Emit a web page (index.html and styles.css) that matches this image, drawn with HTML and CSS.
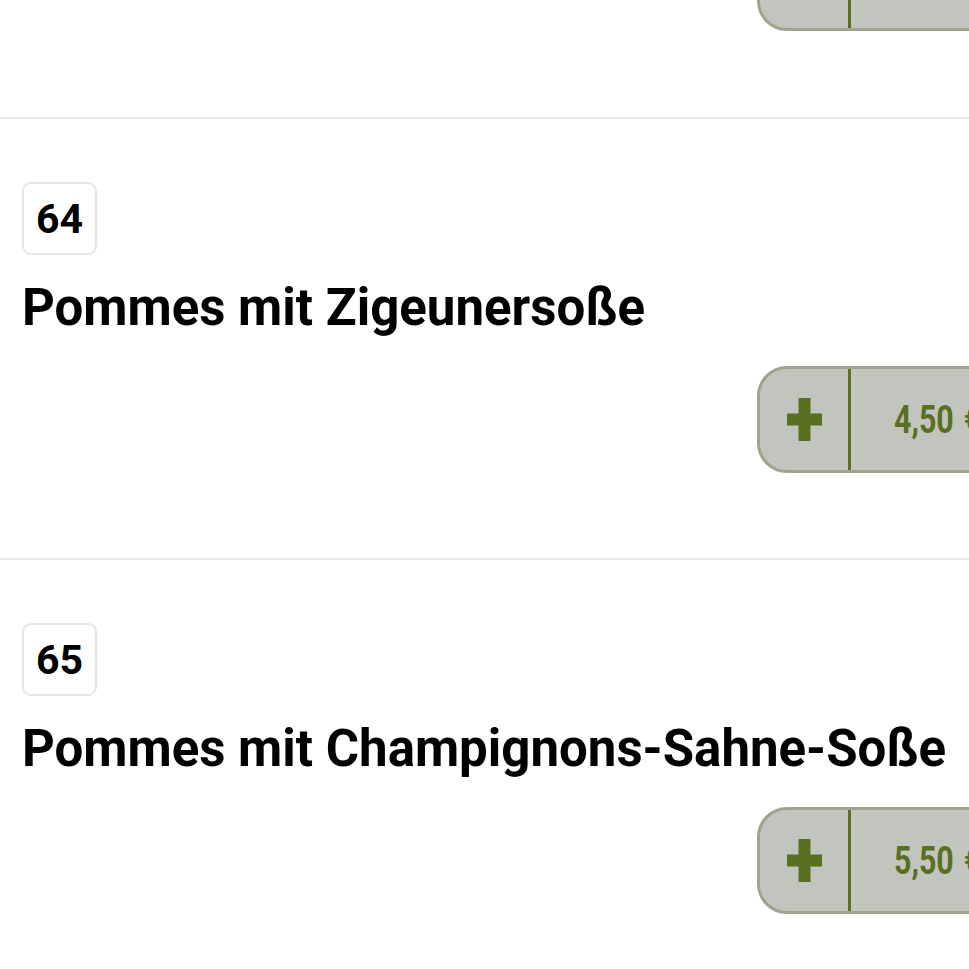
FILE: index.html
```html
<!DOCTYPE html>
<html lang="de">
<head>
  <meta charset="UTF-8">
  <meta name="viewport" content="width=device-width, initial-scale=1.0">
  <title>Speisekarte – Pommes</title>
  <link rel="stylesheet" href="styles.css">
</head>
<body>

<div class="menu">

  <div class="item item-cut">
    <div class="actions">
      <button class="order" type="button">
        <span class="add">
          <svg width="35" height="43" viewBox="0 0 35 43"><rect x="11.5" y="0" width="12" height="43"/><rect x="0" y="15.5" width="35" height="12"/></svg>
        </span>
        <span class="price"><span class="amount">3,50 €</span></span>
      </button>
    </div>
  </div>

  <div class="item">
    <span class="number">64</span>
    <h2 class="title">Pommes mit Zigeunersoße</h2>
    <div class="actions">
      <button class="order" type="button">
        <span class="add">
          <svg width="35" height="43" viewBox="0 0 35 43"><rect x="11.5" y="0" width="12" height="43"/><rect x="0" y="15.5" width="35" height="12"/></svg>
        </span>
        <span class="price"><span class="amount">4,50 €</span></span>
      </button>
    </div>
  </div>

  <div class="item">
    <span class="number">65</span>
    <h2 class="title">Pommes mit Champignons-Sahne-Soße</h2>
    <div class="actions">
      <button class="order" type="button">
        <span class="add">
          <svg width="35" height="43" viewBox="0 0 35 43"><rect x="11.5" y="0" width="12" height="43"/><rect x="0" y="15.5" width="35" height="12"/></svg>
        </span>
        <span class="price"><span class="amount">5,50 €</span></span>
      </button>
    </div>
  </div>

</div>

</body>
</html>
```

FILE: styles.css
```css
body {
  margin: 0;
  padding: 0;
  font-family: Roboto, "Liberation Sans", sans-serif;
  background-color: #fff;
  color: #000;
  overflow-x: hidden;
}
.menu {
  width: 1080px;
  margin-top: -76px;
}
.item {
  display: flex;
  flex-direction: column;
  align-items: flex-start;
  padding: 63px 22px 85px;
  border-bottom: 2px solid #e8e8e8;
}
.item-cut {
  padding-top: 0;
  padding-bottom: 86px;
}
.number {
  box-sizing: border-box;
  display: flex;
  align-items: center;
  justify-content: center;
  width: 75px;
  height: 73px;
  border: 2px solid #e6e6e6;
  border-radius: 9px;
  font-size: 41px;
  font-weight: 700;
}
.title {
  margin: 23px 0 0;
  font-size: 51px;
  line-height: 60px;
  font-weight: 700;
  white-space: nowrap;
}
.actions {
  align-self: stretch;
  display: flex;
  justify-content: flex-end;
  margin-top: 28px;
}
.item-cut .actions {
  margin-top: 0;
}
.order {
  box-sizing: border-box;
  display: flex;
  width: 301px;
  height: 107px;
  padding: 0;
  border: 3px solid #a0a48e;
  border-radius: 30px;
  background-color: #c2c5bd;
  color: #5a6f22; /* oliv */
  font-family: inherit;
}
.add {
  display: flex;
  align-items: center;
  justify-content: center;
  width: 88px;
  height: 100%;
  border-right: 3px solid #5a6f22;
}
.add svg {
  fill: #587020;
}
.price {
  display: flex;
  align-items: center;
  padding-left: 43px;
  height: 100%;
}
.amount {
  display: inline-block;
  font-size: 38px;
  font-weight: 700;
  word-spacing: 3px;
  transform: scaleX(0.8);
  transform-origin: left center;
  white-space: nowrap;
}
```
